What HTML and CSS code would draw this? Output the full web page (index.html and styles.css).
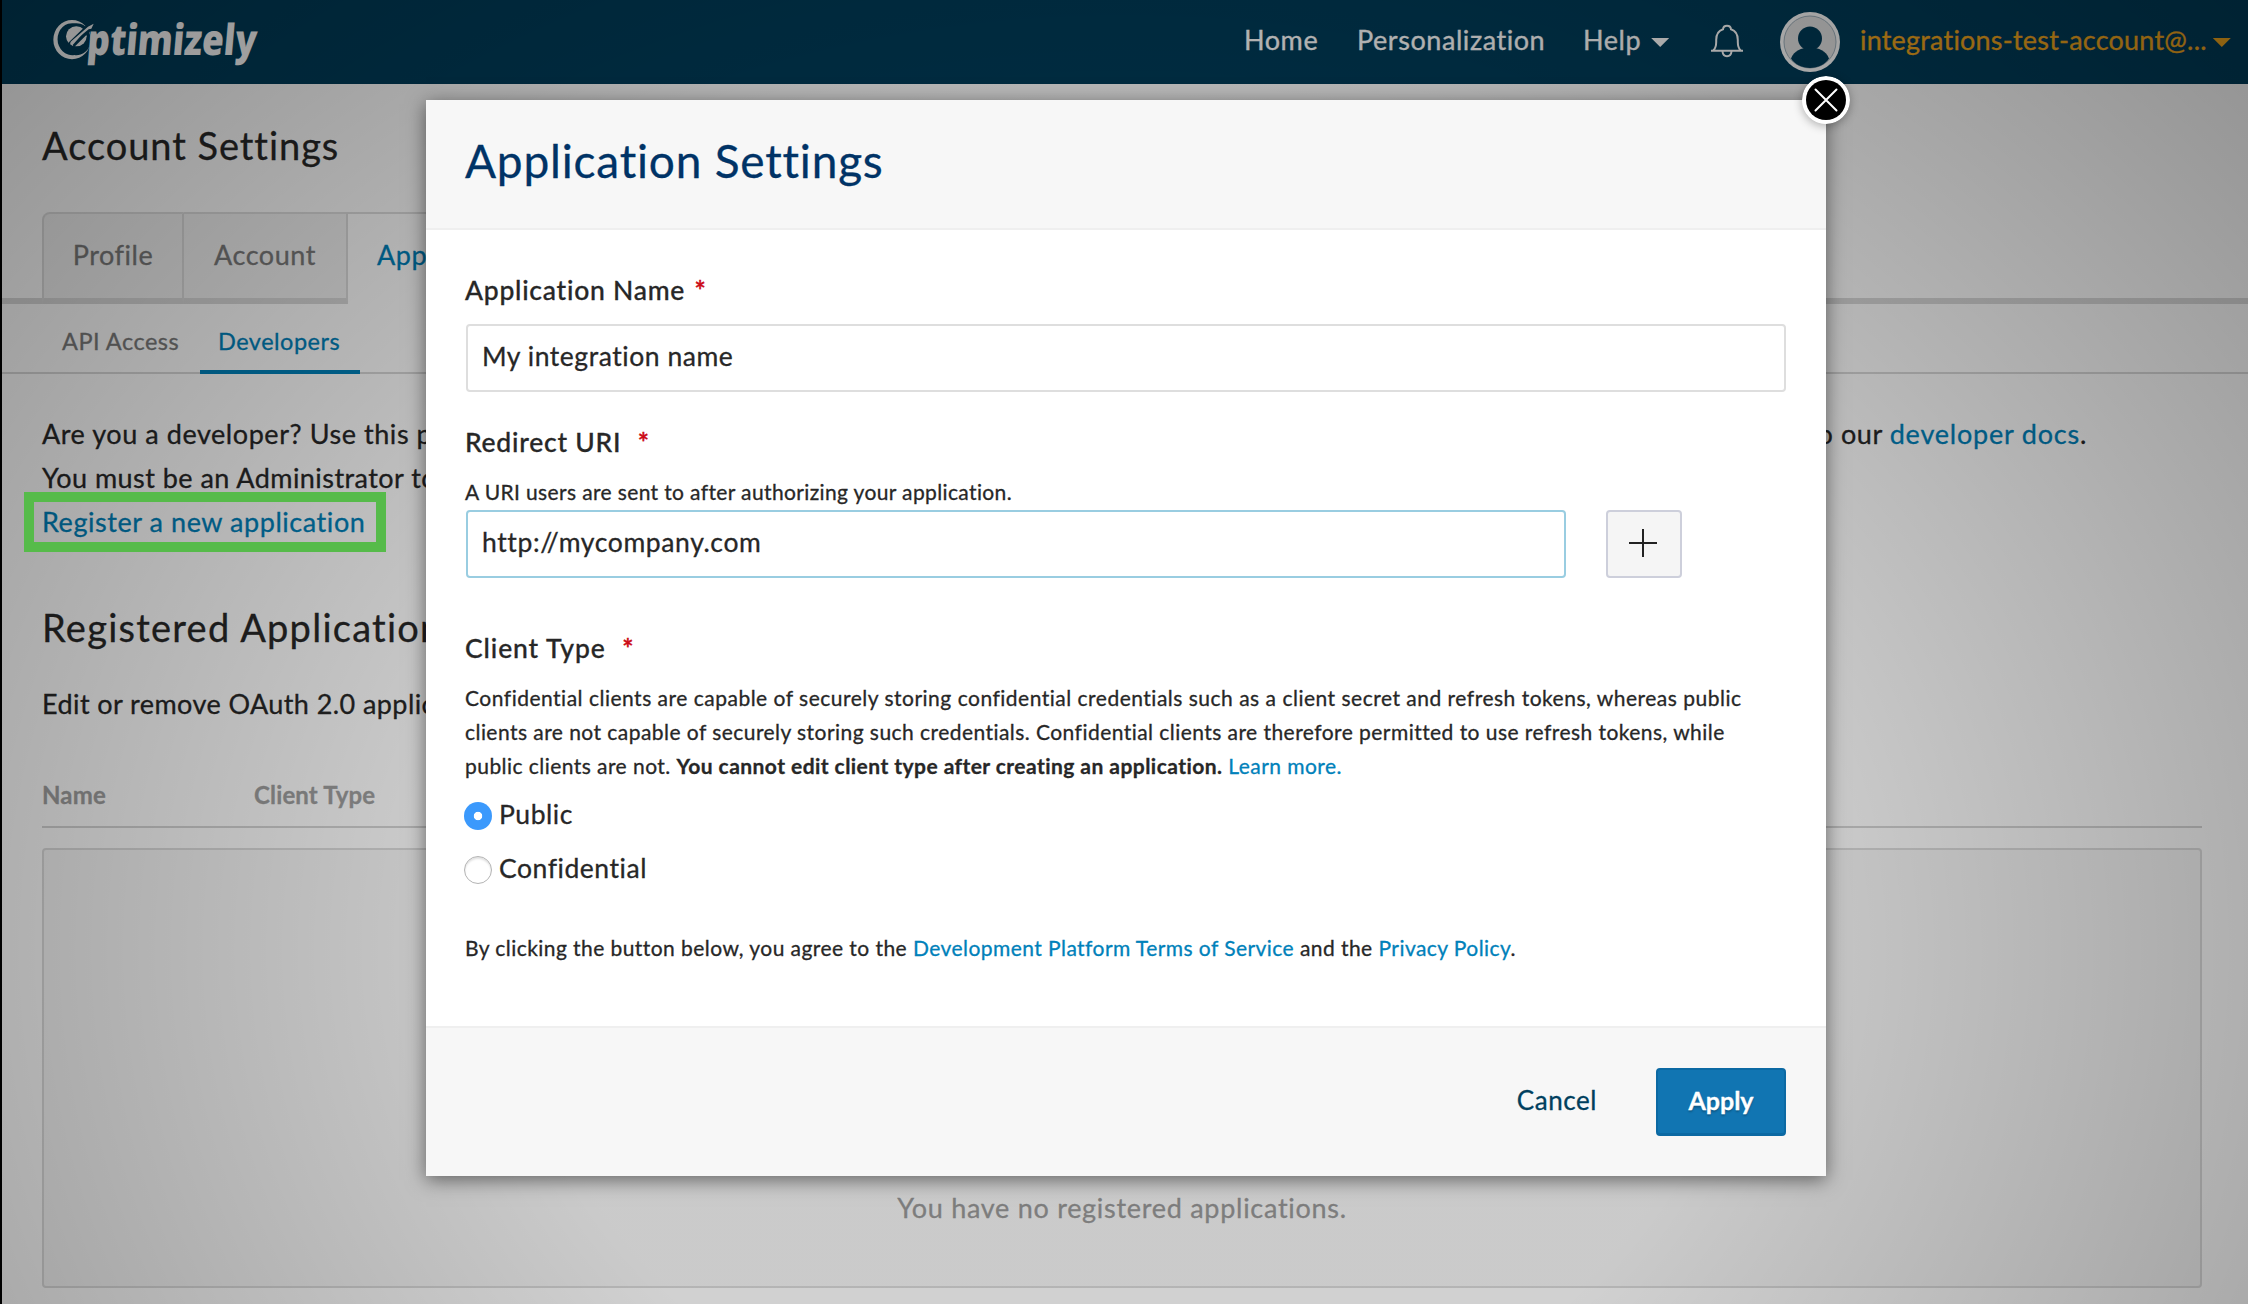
FILE: index.html
```html
<!DOCTYPE html>
<html lang="en">
<head>
<meta charset="utf-8">
<title>Optimizely - Account Settings</title>
<link rel="stylesheet" href="styles.css">
</head>
<body>
<div class="page">
  <header class="topbar">
    <svg class="logo" width="240" height="70" viewBox="0 -24 720 210" role="img" aria-label="Optimizely">
      <path class="logo-fill" fill-rule="evenodd" d="M78 18a56 59 0 1 0 0 118a56 59 0 1 0 0-118zM85 28a44 48 0 1 1 0 95a44 48 0 1 1 0-95z"/>
      <ellipse class="logo-fill" cx="91" cy="67" rx="31" ry="30"/>
      <path class="logo-cut" d="M62 94L70 83L122 33L146 26L134 50L84 100L80 93L118 50L80 80L66 98z"/>
      <path class="logo-fill" d="M74 83L126 38L143 29L136 44L128 46L84 82L72 90z"/>
      <text class="logo-text" transform="translate(121 122) skewX(-5)" x="0" y="0" textLength="508" lengthAdjust="spacingAndGlyphs">ptimizely</text>
    </svg>
    <nav class="nav">
      <a>Home</a>
      <a>Personalization</a>
      <a class="menu">Help <i class="caret"></i></a>
      <svg class="bell" width="34" height="36" viewBox="0 0 34 36">
        <path d="M1 26.8h32M3.2 26.5c2.6-2.3 3-5 3-8.500v-2C6.200 10 9 6.600 13 5.300C13.200 3 14.800 1.800 17 1.800s3.800 1.200 4 3.500c4 1.300 6.800 4.700 6.800 10.700v2c0 3.500 .4 6.200 3 8.500M12.500 27.500c.3 3 2 4.700 4.500 4.700s4.200-1.700 4.500-4.700"/>
      </svg>
      <svg class="avatar" width="60" height="60" viewBox="0 0 60 60">
        <circle class="av-ring" cx="30" cy="30" r="30"/>
        <circle class="av-bg" cx="30" cy="30" r="26"/>
        <circle class="av-person" cx="30" cy="26.500" r="12"/>
        <path class="av-person" d="M11 46.500C14 39 21 35.500 30 35.500S46 39 49 46.500C45 52.500 38 56 30 56S15 52.500 11 46.500z"/>
      </svg>
      <a class="menu user">integrations-test-account@... <i class="caret"></i></a>
    </nav>
  </header>

  <h1 class="page-title">Account Settings</h1>

  <div class="tabs">
    <span class="tab-gap"></span>
    <a class="tab tab-first">Profile</a>
    <a class="tab">Account</a>
    <a class="tab tab-active">App Settings</a>
    <span class="tab-fill"></span>
  </div>

  <div class="subnav">
    <a class="subtab">API Access</a>
    <a class="subtab subtab-active">Developers</a>
  </div>

  <main class="content">
    <div class="intro">
      <p class="split"><span>Are you a developer? Use this page</span><span>to our <a class="link docs">developer docs</a>.</span></p>
      <p class="tight">You must be an Administrator to</p>
      <p><a class="link">Register a new application</a></p>
    </div>
    <h2 class="section-title">Registered Applications</h2>
    <p class="section-text">Edit or remove OAuth 2.0 applications</p>
    <div class="table-head"><span>Name</span><span>Client Type</span></div>
    <div class="empty">You have no registered applications.</div>
  </main>
</div>

<div class="shade"></div>
<div class="highlight"></div>

<section class="modal">
  <header class="modal-head"><h2>Application Settings</h2></header>
  <div class="modal-body">
    <label class="label">Application Name <b class="req">*</b></label>
    <input class="input name-input" value="My integration name">
    <label class="label redirect-label">Redirect URI <b class="req wide">*</b></label>
    <p class="hint">A URI users are sent to after authorizing your application.</p>
    <div class="uri-row">
      <input class="input uri-input" value="http://mycompany.com">
      <button class="plus" aria-label="Add"><svg width="28" height="28" viewBox="0 0 28 28"><path d="M14 0v28M0 14h28"/></svg></button>
    </div>
    <label class="label client-label">Client Type <b class="req wide">*</b></label>
    <p class="desc"><span class="loose">Confidential clients are capable of securely storing confidential credentials such as a client secret and refresh tokens, whereas public</span><br>clients are not capable of securely storing such credentials. Confidential clients are therefore permitted to use refresh tokens, while<br>public clients are not. <strong>You cannot edit client type after creating an application.</strong> <a class="link">Learn more.</a></p>
    <div class="choice first"><i class="radio checked"></i>Public</div>
    <div class="choice"><i class="radio"></i>Confidential</div>
    <p class="agree">By clicking the button below, you agree to the <a class="link">Development Platform Terms of Service</a> and the <a class="link">Privacy Policy</a>.</p>
  </div>
  <footer class="modal-foot">
    <a class="cancel">Cancel</a>
    <button class="apply">Apply</button>
  </footer>
  <svg class="close" width="48" height="48" viewBox="0 0 48 48">
    <circle class="close-ring" cx="24" cy="24" r="24"/>
    <circle cx="24" cy="24" r="20"/>
    <path d="M13.500 13.500l21 21M34.500 13.500l-21 21"/>
  </svg>
</section>
</body>
</html>
```
FILE: styles.css
```css
* { box-sizing: border-box; }

body {
  margin: 0;
  width: 2248px;
  height: 1304px;
  overflow: hidden;
  position: relative;
  background: #fff;
  font-family: Lato, "Open Sans", sans-serif;
  font-size: 27px;
  line-height: 44px;
  letter-spacing: 0.56px;
  color: #272727;
  -webkit-text-stroke: 0.3px;
}

h1, h2, p { margin: 0; font-weight: 400; }
a, span { white-space: nowrap; }
.link { color: #0081ba; }

.page {
  height: 1304px;
  border-left: 2px solid #000;
  overflow: hidden;
}

/* Top bar */
.topbar {
  display: flex;
  justify-content: space-between;
  height: 84px;
  background: #003c59;
  color: #fff;
}
.logo { margin: 6px 0 0 44px; }
.logo-fill, .logo-text { fill: #fff; }
.logo-cut { fill: #003c59; }
.logo-text {
  font-family: "Open Sans", sans-serif;
  font-weight: 800;
  font-size: 128px;
  letter-spacing: 0;
}
.nav {
  display: grid;
  grid-template-columns: 113px 226px 127px 70px 80px 388px;
  align-items: center;
  height: 79px;
}
.menu { display: flex; align-items: center; }
.caret {
  width: 18px;
  height: 9px;
  margin: 6px 0 0 10px;
  background: currentColor;
  clip-path: polygon(0 0, 100% 0, 50% 100%);
}
.bell { margin-top: 5px; fill: none; stroke: #fff; stroke-width: 2; }
.avatar { margin-top: 5px; }
.av-ring { fill: #fff; }
.av-bg { fill: #e6e6e6; stroke: #9fb1bd; stroke-width: 1; }
.av-person { fill: #003c59; }
.user { color: #f3a81d; letter-spacing: 0.2px; }
.user .caret { margin-left: 6px; }

.page-title {
  margin: 37px 0 43px 40px;
  font-size: 38px;
  line-height: 48px;
  letter-spacing: 0.95px;
}

/* Tabs */
.tabs { display: flex; height: 92px; }
.tab-gap { width: 40px; border-bottom: 6px solid #d9d9d9; }
.tab {
  padding-top: 19px;
  border-top: 2px solid #dedede;
  border-bottom: 6px solid #d9d9d9;
  border-right: 2px solid #dcdcdc;
  width: 164px;
  text-align: center;
  background: #f3f3f3;
  color: #7b7b7b;
}
.tab-first {
  width: 142px;
  border-left: 2px solid #dcdcdc;
  border-top-left-radius: 8px;
}
.tab-active {
  width: 220px;
  padding-left: 29px;
  text-align: left;
  border-bottom: 0;
  border-right: 0;
  background: transparent;
  color: #0081ba;
}
.tab-fill { flex: 1; border-bottom: 6px solid #d9d9d9; }

.subnav {
  display: flex;
  height: 70px;
  padding-left: 40px;
  font-size: 23.5px;
  letter-spacing: 0.5px;
  line-height: 66px;
  box-shadow: inset 0 -2px #d8d8d8;
}
.subtab { width: 158px; padding: 4px 20px 0; color: #7b7b7b; }
.subtab-active {
  width: 160px;
  padding-left: 18px;
  color: #0081ba;
  box-shadow: inset 0 -4px #0081ba;
}

.content { padding: 38px 46px 0 40px; }
.intro { margin-bottom: 59px; }
.split { display: flex; justify-content: space-between; width: 2045px; }
.docs { letter-spacing: 0.8px; }
.tight { letter-spacing: 0.45px; }
.section-title {
  margin: 0 0 31px;
  font-size: 38px;
  line-height: 48px;
  letter-spacing: 1.25px;
}
.section-text { letter-spacing: 0.42px; }
.table-head {
  display: grid;
  grid-template-columns: 212px 1fr;
  height: 51px;
  margin-top: 51px;
  border-bottom: 2px solid #d4d4d4;
  font-size: 24px;
  font-weight: 700;
  line-height: 36px;
  letter-spacing: 0.15px;
  color: #9f9f9f;
}
.empty {
  height: 440px;
  margin-top: 20px;
  padding-top: 336px;
  border: 2px solid #dcdcdc;
  border-radius: 4px;
  background: #f7f7f7;
  text-align: center;
  color: #999;
  letter-spacing: 0.72px;
}

/* Dimming layer and call-out frame */
.shade {
  position: absolute;
  inset: 0;
  background: radial-gradient(1590px 1343px at 1124px 950px, rgba(0,0,0,.18) 0, rgba(0,0,0,.18) 38%, rgba(0,0,0,.43) 100%);
}
.highlight {
  position: absolute;
  left: 24px;
  top: 492px;
  width: 362px;
  height: 60px;
  border: 10px solid #56bb4a;
}

/* Modal */
.modal {
  position: absolute;
  left: 426px;
  top: 100px;
  width: 1400px;
  height: 1076px;
  display: flex;
  flex-direction: column;
  background: #fff;
  box-shadow: 0 4px 18px rgba(0,0,0,.5);
}
.modal-head {
  height: 130px;
  padding: 33px 39px 0;
  background: #f7f7f7;
  border-bottom: 2px solid #efefef;
}
.modal-head h2 {
  font-size: 46px;
  line-height: 56px;
  letter-spacing: 0.8px;
  color: #003366;
}
.modal-body { flex: 1; padding: 42px 40px 0 39px; font-size: 26.5px; }
.label {
  display: block;
  line-height: 36px;
  font-weight: 500;
  letter-spacing: 0.75px;
}
.req { margin-left: 2px; color: #cc0c18; font-weight: 700; }
.req.wide { margin-left: 9px; }
.input {
  display: block;
  height: 68px;
  margin: 0 0 0 1px;
  padding: 0 14px 4px;
  border: 2px solid #dedede;
  border-radius: 4px;
  background: #fff;
  font: 400 26.5px Lato, "Open Sans", sans-serif;
  letter-spacing: 0.55px;
  color: #272727;
  outline: 0;
  -webkit-text-stroke: 0.3px;
}
.name-input { width: 1320px; margin-top: 16px; }
.redirect-label { margin-top: 32px; }
.hint {
  margin: 15px 0 1px;
  font-size: 21px;
  line-height: 34px;
  letter-spacing: 0.37px;
}
.uri-row { display: flex; gap: 40px; }
.uri-input { width: 1100px; border-color: #99cde1; letter-spacing: 0.62px; }
.plus {
  width: 76px;
  height: 68px;
  padding: 0 2px 2px 0;
  border: 2px solid #cdcfdb;
  border-radius: 4px;
  background: #f5f5f5;
  display: flex;
  align-items: center;
  justify-content: center;
}
.plus path { stroke: #222; stroke-width: 2; }
.client-label { margin-top: 52px; letter-spacing: 0.9px; }
.desc {
  margin: 15px 0 13px;
  font-size: 21px;
  line-height: 34px;
  letter-spacing: 0.45px;
  white-space: nowrap;
}
.desc .loose { letter-spacing: 0.5px; }
.choice {
  display: flex;
  gap: 7px;
  margin: 18px 0 0 -1px;
  line-height: 36px;
  letter-spacing: 0.55px;
}
.choice.first { margin-top: 0; }
.radio {
  width: 28px;
  height: 28px;
  margin-top: 6px;
  border: 1px solid #b4b4b4;
  border-radius: 50%;
  box-shadow: inset 0 2px 2px rgba(0,0,0,.12);
}
.radio.checked {
  border: 0;
  background: radial-gradient(circle, #fff 3.800px, #3b99fc 4.600px);
  box-shadow: none;
}
.agree {
  margin-top: 45px;
  font-size: 21px;
  line-height: 34px;
  letter-spacing: 0.44px;
}
.modal-foot {
  display: flex;
  justify-content: flex-end;
  height: 150px;
  padding: 40px 40px 0;
  border-top: 2px solid #efefef;
  background: #f7f7f7;
  font-size: 26px;
}
.cancel { margin-right: 59px; line-height: 65px; color: #003f5e; }
.apply {
  width: 130px;
  height: 68px;
  padding: 0 0 3px;
  border: 2px solid #0c69a3;
  border-bottom-width: 3px;
  border-radius: 4px;
  background: #1175b2;
  color: #fff;
  font: 700 25px Lato, "Open Sans", sans-serif;
  text-shadow: 0 2px 2px rgba(0,0,0,.25);
}
.close {
  position: absolute;
  left: 1376px;
  top: -24px;
  border-radius: 50%;
  box-shadow: 0 2px 10px rgba(0,0,0,.3);
}
.close-ring { fill: #fff; }
.close path { stroke: #fff; stroke-width: 2; stroke-linecap: round; }
```
